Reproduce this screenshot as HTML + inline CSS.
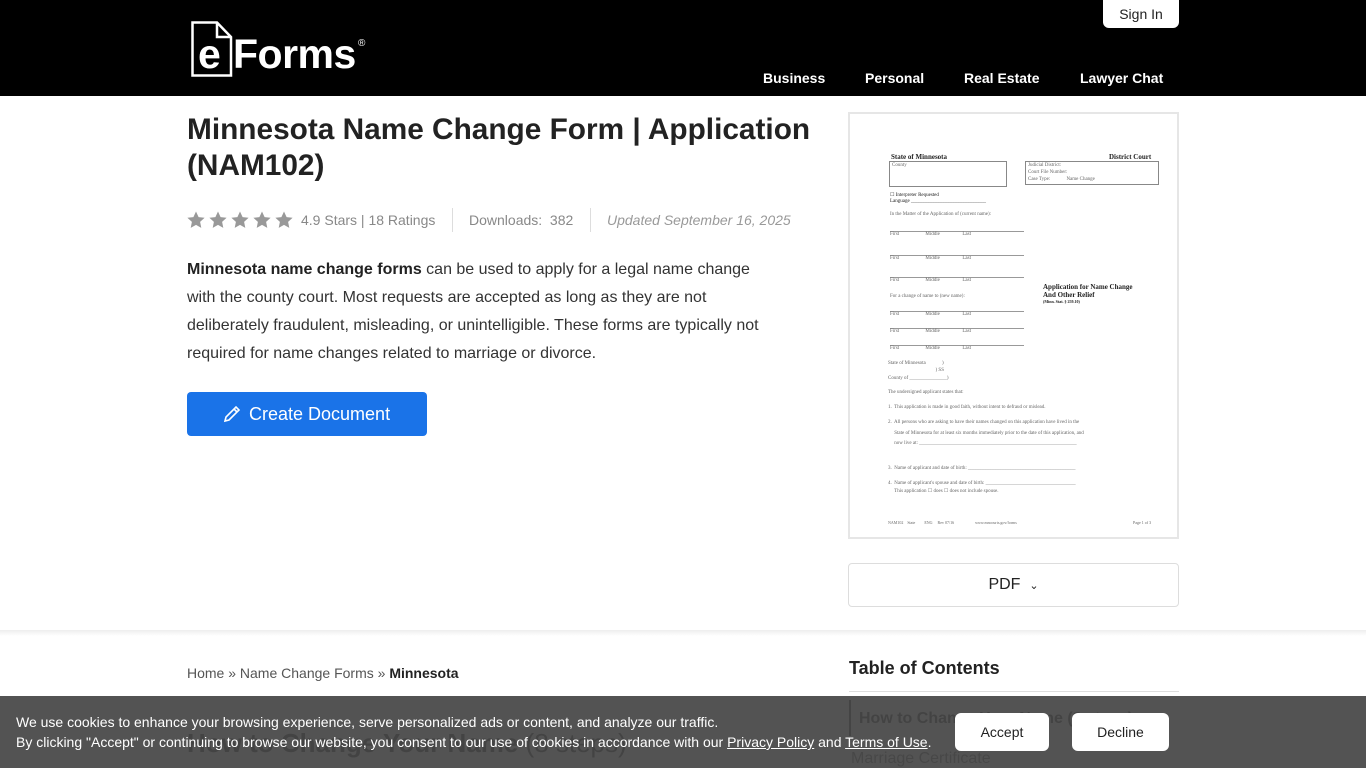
<!DOCTYPE html>
<html><head><meta charset="utf-8"><style>
*{box-sizing:border-box;margin:0;padding:0}
body{width:1366px;height:768px;overflow:hidden;font-family:"Liberation Sans",Arial,sans-serif;background:#fff;position:relative;color:#222}
.hdr{position:absolute;left:0;top:0;width:1366px;height:96px;background:#000}
.abs{position:absolute}
.nav a{position:absolute;top:70px;color:#fff;font-weight:bold;font-size:14px;text-decoration:none}
.signin{position:absolute;left:1103px;top:0;width:76px;height:28px;background:#fff;border-radius:0 0 6px 6px;font-size:14px;color:#222;text-align:center;line-height:28px}
h1{position:absolute;left:187px;top:112px;width:660px;font-size:29.8px;line-height:36px;font-weight:bold;color:#222}
.meta{position:absolute;top:212px;font-size:14px;color:#888}
.desc{position:absolute;left:187px;top:256px;width:590px;font-size:16px;line-height:28px;color:#333}
.btn{position:absolute;left:187px;top:392px;width:240px;height:44px;background:#1a73e8;border-radius:4px;color:#fff;font-size:18px;line-height:44px;padding-left:62px}
.form{position:absolute;left:848px;top:112px;width:331px;height:427px;border:2px solid #e6e6e6;background:#fff;font-family:"Liberation Serif",serif;color:#222;overflow:hidden}
.form .t{position:absolute;font-size:5px;color:#666;white-space:nowrap}
.form .ln{position:absolute;height:1px;background:#999}
.pdf{position:absolute;left:848px;top:563px;width:331px;height:44px;border:1px solid #ddd;border-radius:4px;text-align:center;line-height:42px;font-size:16px;color:#222}
.shadow{position:absolute;left:0;top:630px;width:1366px;height:6px;background:linear-gradient(#eee,#fff)}
.bc{position:absolute;left:187px;top:665px;font-size:14px;color:#555}
.cookie{position:absolute;left:0;top:696px;width:1366px;height:72px;background:rgba(70,70,70,.93);color:#fff;font-size:14px}
.cb{position:absolute;top:17px;width:94px;height:38px;background:#fff;border-radius:6px;color:#222;font-size:14px;text-align:center;line-height:38px}
</style></head><body>
<div class="hdr"></div>
<svg class="abs" style="left:191px;top:21px" width="44" height="56" viewBox="0 0 44 56"><path d="M1.5 1.5H26L40 16V54.5H1.5Z M26 1.5V16H40" fill="none" stroke="#fff" stroke-width="2.5"/></svg>
<div class="abs" style="left:198px;top:34px;font-size:41px;line-height:41px;font-weight:bold;color:#fff">e</div>
<div class="abs" style="left:233px;top:34px;font-size:41px;line-height:41px;font-weight:bold;color:#fff;letter-spacing:-0.5px">Forms</div>
<div class="abs" style="left:358px;top:38px;font-size:10px;color:#fff">®</div>
<div class="signin">Sign In</div>
<div class="nav"><a style="left:763px">Business</a><a style="left:865px">Personal</a><a style="left:964px">Real Estate</a><a style="left:1080px">Lawyer Chat</a></div>

<h1>Minnesota Name Change Form | Application (NAM102)</h1>
<svg class="abs" style="left:187px;top:211px" width="108" height="18" viewBox="0 0 108 18"><g fill="#999"><path id="s" d="M9 0.5l2.6 5.6 6 .7-4.5 4.1 1.2 6L9 13.9 3.7 16.9l1.2-6L.4 6.8l6-.7z"/><use href="#s" x="22"/><use href="#s" x="44"/><use href="#s" x="66"/><use href="#s" x="88"/></g></svg>
<div class="meta" style="left:301px">4.9 Stars | 18 Ratings</div>
<div class="abs" style="left:452px;top:208px;width:1px;height:24px;background:#ddd"></div>
<div class="meta" style="left:469px">Downloads:&nbsp; 382</div>
<div class="abs" style="left:590px;top:208px;width:1px;height:24px;background:#ddd"></div>
<div class="meta" style="left:607px;font-style:italic;color:#999">Updated September 16, 2025</div>
<div class="desc"><b style="color:#222">Minnesota name change forms</b> can be used to apply for a legal name change with the county court. Most requests are accepted as long as they are not deliberately fraudulent, misleading, or unintelligible. These forms are typically not required for name changes related to marriage or divorce.</div>
<div class="btn"><svg class="abs" style="left:36px;top:13px" width="18" height="18" viewBox="0 0 18 18"><path d="M2 16l1-4L13 2l3 3L6 15z M11 4l3 3" fill="none" stroke="#fff" stroke-width="1.6"/></svg>Create Document</div>

<div class="form">
<div class="t" style="left:41px;top:39px;font-size:7px;font-weight:bold;color:#222">State of Minnesota</div>
<div class="t" style="left:259px;top:39px;font-size:7px;font-weight:bold;color:#222">District Court</div>
<div class="abs" style="left:39px;top:47px;width:118px;height:26px;border:1px solid #888"></div>
<div class="t" style="left:42px;top:49px">County</div>
<div class="abs" style="left:175px;top:47px;width:134px;height:24px;border:1px solid #888"></div>
<div class="t" style="left:178px;top:49px">Judicial District:</div>
<div class="t" style="left:178px;top:56px">Court File Number:</div>
<div class="t" style="left:178px;top:63px">Case Type:&nbsp;&nbsp;&nbsp;&nbsp;&nbsp;&nbsp;&nbsp;&nbsp;&nbsp;&nbsp;&nbsp;&nbsp; Name Change</div>
<div class="t" style="left:40px;top:78px;color:#222">☐ Interpreter Requested</div>
<div class="t" style="left:40px;top:85px;color:#222">Language ______________________________</div>
<div class="t" style="left:40px;top:98px">In the Matter of the Application of (current name):</div>
<div class="ln" style="left:40px;top:117px;width:134px"></div><div class="t" style="left:40px;top:118px">First&nbsp;&nbsp;&nbsp;&nbsp;&nbsp;&nbsp;&nbsp;&nbsp;&nbsp;&nbsp;&nbsp;&nbsp;&nbsp;&nbsp;&nbsp;&nbsp;&nbsp;&nbsp;&nbsp;&nbsp; Middle&nbsp;&nbsp;&nbsp;&nbsp;&nbsp;&nbsp;&nbsp;&nbsp;&nbsp;&nbsp;&nbsp;&nbsp;&nbsp;&nbsp;&nbsp;&nbsp;&nbsp; Last</div>
<div class="ln" style="left:40px;top:141px;width:134px"></div><div class="t" style="left:40px;top:142px">First&nbsp;&nbsp;&nbsp;&nbsp;&nbsp;&nbsp;&nbsp;&nbsp;&nbsp;&nbsp;&nbsp;&nbsp;&nbsp;&nbsp;&nbsp;&nbsp;&nbsp;&nbsp;&nbsp;&nbsp; Middle&nbsp;&nbsp;&nbsp;&nbsp;&nbsp;&nbsp;&nbsp;&nbsp;&nbsp;&nbsp;&nbsp;&nbsp;&nbsp;&nbsp;&nbsp;&nbsp;&nbsp; Last</div>
<div class="ln" style="left:40px;top:163px;width:134px"></div><div class="t" style="left:40px;top:164px">First&nbsp;&nbsp;&nbsp;&nbsp;&nbsp;&nbsp;&nbsp;&nbsp;&nbsp;&nbsp;&nbsp;&nbsp;&nbsp;&nbsp;&nbsp;&nbsp;&nbsp;&nbsp;&nbsp;&nbsp; Middle&nbsp;&nbsp;&nbsp;&nbsp;&nbsp;&nbsp;&nbsp;&nbsp;&nbsp;&nbsp;&nbsp;&nbsp;&nbsp;&nbsp;&nbsp;&nbsp;&nbsp; Last</div>
<div class="t" style="left:40px;top:180px">For a change of name to (new name):</div>
<div class="ln" style="left:40px;top:197px;width:134px"></div><div class="t" style="left:40px;top:198px">First&nbsp;&nbsp;&nbsp;&nbsp;&nbsp;&nbsp;&nbsp;&nbsp;&nbsp;&nbsp;&nbsp;&nbsp;&nbsp;&nbsp;&nbsp;&nbsp;&nbsp;&nbsp;&nbsp;&nbsp; Middle&nbsp;&nbsp;&nbsp;&nbsp;&nbsp;&nbsp;&nbsp;&nbsp;&nbsp;&nbsp;&nbsp;&nbsp;&nbsp;&nbsp;&nbsp;&nbsp;&nbsp; Last</div>
<div class="ln" style="left:40px;top:214px;width:134px"></div><div class="t" style="left:40px;top:215px">First&nbsp;&nbsp;&nbsp;&nbsp;&nbsp;&nbsp;&nbsp;&nbsp;&nbsp;&nbsp;&nbsp;&nbsp;&nbsp;&nbsp;&nbsp;&nbsp;&nbsp;&nbsp;&nbsp;&nbsp; Middle&nbsp;&nbsp;&nbsp;&nbsp;&nbsp;&nbsp;&nbsp;&nbsp;&nbsp;&nbsp;&nbsp;&nbsp;&nbsp;&nbsp;&nbsp;&nbsp;&nbsp; Last</div>
<div class="ln" style="left:40px;top:231px;width:134px"></div><div class="t" style="left:40px;top:232px">First&nbsp;&nbsp;&nbsp;&nbsp;&nbsp;&nbsp;&nbsp;&nbsp;&nbsp;&nbsp;&nbsp;&nbsp;&nbsp;&nbsp;&nbsp;&nbsp;&nbsp;&nbsp;&nbsp;&nbsp; Middle&nbsp;&nbsp;&nbsp;&nbsp;&nbsp;&nbsp;&nbsp;&nbsp;&nbsp;&nbsp;&nbsp;&nbsp;&nbsp;&nbsp;&nbsp;&nbsp;&nbsp; Last</div>
<div class="t" style="left:193px;top:169px;font-size:7px;font-weight:bold;color:#222;line-height:8px">Application for Name Change<br>And Other Relief</div>
<div class="t" style="left:193px;top:185px;font-size:4px;font-weight:bold;color:#222">(Minn. Stat. § 259.10)</div>
<div class="t" style="left:38px;top:247px">State of Minnesota&nbsp;&nbsp;&nbsp;&nbsp;&nbsp;&nbsp;&nbsp;&nbsp;&nbsp;&nbsp;&nbsp;&nbsp;&nbsp;)</div>
<div class="t" style="left:38px;top:254px">&nbsp;&nbsp;&nbsp;&nbsp;&nbsp;&nbsp;&nbsp;&nbsp;&nbsp;&nbsp;&nbsp;&nbsp;&nbsp;&nbsp;&nbsp;&nbsp;&nbsp;&nbsp;&nbsp;&nbsp;&nbsp;&nbsp;&nbsp;&nbsp;&nbsp;&nbsp;&nbsp;&nbsp;&nbsp;&nbsp;&nbsp;&nbsp;&nbsp;&nbsp;&nbsp;&nbsp;&nbsp;&nbsp;) SS</div>
<div class="t" style="left:38px;top:262px">County of _______________)</div>
<div class="t" style="left:38px;top:276px">The undersigned applicant states that:</div>
<div class="t" style="left:38px;top:291px">1.&nbsp; This application is made in good faith, without intent to defraud or mislead.</div>
<div class="t" style="left:38px;top:306px">2.&nbsp; All persons who are asking to have their names changed on this application have lived in the</div>
<div class="t" style="left:38px;top:317px">&nbsp;&nbsp;&nbsp;&nbsp; State of Minnesota for at least six months immediately prior to the date of this application, and</div>
<div class="t" style="left:38px;top:327px">&nbsp;&nbsp;&nbsp;&nbsp; now live at: _______________________________________________________________</div>
<div class="t" style="left:38px;top:352px">3.&nbsp; Name of applicant and date of birth: ___________________________________________</div>
<div class="t" style="left:38px;top:367px">4.&nbsp; Name of applicant's spouse and date of birth: ____________________________________</div>
<div class="t" style="left:38px;top:374px">&nbsp;&nbsp;&nbsp;&nbsp; This application ☐ does ☐ does not include spouse.</div>
<div class="t" style="left:38px;top:406px;font-size:4px">NAM102&nbsp;&nbsp;&nbsp; State&nbsp;&nbsp;&nbsp;&nbsp;&nbsp;&nbsp;&nbsp;&nbsp; ENG&nbsp;&nbsp;&nbsp;&nbsp; Rev 07/16&nbsp;&nbsp;&nbsp;&nbsp;&nbsp;&nbsp;&nbsp;&nbsp;&nbsp;&nbsp;&nbsp;&nbsp;&nbsp;&nbsp;&nbsp;&nbsp;&nbsp;&nbsp;&nbsp;&nbsp; www.mncourts.gov/forms</div>
<div class="t" style="left:283px;top:406px;font-size:4px">Page 1 of 3</div>
</div>
<div class="pdf">PDF&nbsp; <span style="font-size:11px">⌄</span></div>

<div class="shadow"></div>
<div class="bc">Home » Name Change Forms » <b style="color:#222">Minnesota</b></div>
<div class="abs" style="left:187px;top:728px;font-size:26px;font-weight:bold;color:#222">How to Change Your Name <span style="font-weight:normal">(8 steps)</span></div>
<div class="abs" style="left:849px;top:658px;font-size:18px;font-weight:bold;color:#222">Table of Contents</div>
<div class="abs" style="left:849px;top:691px;width:330px;height:1px;background:#ddd"></div>
<div class="abs" style="left:849px;top:700px;width:2px;height:36px;background:#333"></div>
<div class="abs" style="left:859px;top:710px;font-size:16px;font-weight:bold;color:#222">How to Change Your Name (8 steps)</div>
<div class="abs" style="left:851px;top:750px;font-size:16px;color:#555">Marriage Certificate</div>

<div class="cookie">
<div class="abs" style="left:16px;top:18px">We use cookies to enhance your browsing experience, serve personalized ads or content, and analyze our traffic.</div>
<div class="abs" style="left:16px;top:38px">By clicking "Accept" or continuing to browse our website, you consent to our use of cookies in accordance with our <u>Privacy Policy</u> and <u>Terms of Use</u>.</div>
<div class="cb" style="left:955px">Accept</div>
<div class="cb" style="left:1072px;width:97px">Decline</div>
</div>
</body></html>
